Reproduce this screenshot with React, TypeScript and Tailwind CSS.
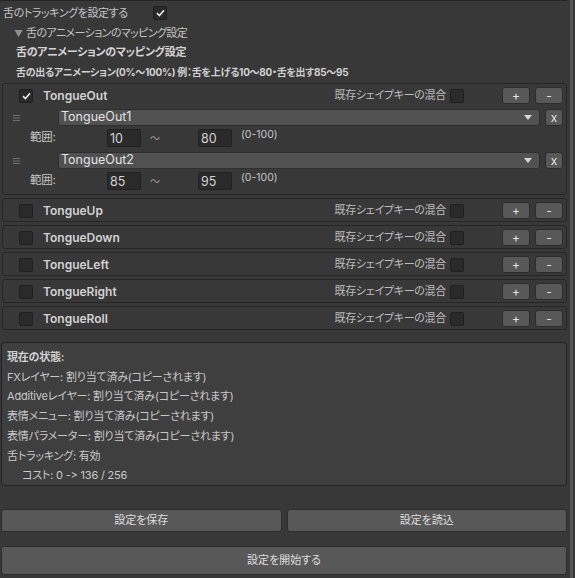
import React from "react";

const FONT =
  "font-[family-name:Inter,'Noto_Sans_CJK_JP',sans-serif] [font-feature-settings:'palt','calt'_0,'liga'_0]";

function Check() {
  return (
    <svg width="9" height="8" viewBox="0 0 9 8" fill="none">
      <path d="M1 4.2 L3.4 6.5 L8 1.3" stroke="#e8e8e8" strokeWidth="1.6" />
    </svg>
  );
}

function CheckBox({ checked = false }: { checked?: boolean }) {
  return (
    <div className="w-[14px] h-[14px] shrink-0 rounded-[2px] bg-[#2a2a2a] border border-[#1f1f1f] flex items-center justify-center">
      {checked && <Check />}
    </div>
  );
}

function SmallButton({ label, w = "w-[28px]" }: { label: string; w?: string }) {
  return (
    <div
      className={`${w} h-[17px] shrink-0 rounded-[3px] bg-[#585858] border border-[#2c2c2c] flex items-center justify-center text-[12px] leading-none text-[#e4e4e4]`}
    >
      {label}
    </div>
  );
}

function Handle() {
  return (
    <svg width="7" height="6" viewBox="0 0 7 6">
      <rect x="0" y="0" width="7" height="1" fill="#6e6e6e" />
      <rect x="0" y="2.5" width="7" height="1" fill="#6e6e6e" />
      <rect x="0" y="5" width="7" height="1" fill="#6e6e6e" />
    </svg>
  );
}

function Dropdown({ value }: { value: string }) {
  return (
    <div className="flex items-center h-[17px] mt-[5px]">
      <div className="w-[55px] pl-[10px] flex items-center">
        <Handle />
      </div>
      <div className="flex-1 h-full rounded-[3px] bg-[#515151] border border-[#2e2e2e] flex items-center pl-[2px] pr-[7px]">
        <span className="flex-1 text-[12.5px] text-[#e2e2e2] leading-none">{value}</span>
        <svg width="8" height="5" viewBox="0 0 8 5">
          <path d="M0 0 H8 L4 5 Z" fill="#d8d8d8" />
        </svg>
      </div>
      <div className="ml-[5px] mr-[3px]">
        <SmallButton label="x" w="w-[18px]" />
      </div>
    </div>
  );
}

function NumField({ value }: { value: string }) {
  return (
    <div className="w-[34px] h-[18px] shrink-0 rounded-[2px] bg-[#2a2a2a] border border-[#212121] flex items-end pl-[2px] pb-[1px] text-[12.5px] leading-none text-[#d4d4d4]">
      {value}
    </div>
  );
}

function RangeRow({ from, to }: { from: string; to: string }) {
  return (
    <div className="flex items-center h-[18px] mt-[3px]">
      <div className="w-[104px] pl-[27px] text-[11.5px] tracking-[-0.2px] text-[#c4c4c4] leading-none">範囲:</div>
      <NumField value={from} />
      <div className="w-[57px] pl-[9px] text-[10px] text-[#a0a0a0] leading-none">〜</div>
      <NumField value={to} />
      <div className="ml-[9px] self-start pt-[1px] text-[10.5px] text-[#c4c4c4] leading-none">(0-100)</div>
    </div>
  );
}

function HeaderRow({ name, checked }: { name: string; checked?: boolean }) {
  return (
    <div className="flex items-center h-[17px]">
      <div className="ml-[16px]">
        <CheckBox checked={checked} />
      </div>
      <span className="ml-[10px] text-[12px] font-semibold text-[#d2d2d2] leading-none">{name}</span>
      <div className="flex-1" />
      <span className="text-[11px] tracking-[-0.3px] text-[#bdbdbd] leading-none">既存シェイプキーの混合</span>
      <div className="ml-[4px]">
        <CheckBox />
      </div>
      <div className="ml-[38px]">
        <SmallButton label="+" />
      </div>
      <div className="ml-[5px] mr-[3px]">
        <SmallButton label="-" />
      </div>
    </div>
  );
}

const others = ["TongueUp", "TongueDown", "TongueLeft", "TongueRight", "TongueRoll"];

const status = [
  "FXレイヤー: 割り当て済み(コピーされます)",
  "Additiveレイヤー: 割り当て済み(コピーされます)",
  "表情メニュー: 割り当て済み(コピーされます)",
  "表情パラメーター: 割り当て済み(コピーされます)",
  "舌トラッキング: 有効",
];

export default function App() {
  return (
    <div className={`w-[575px] h-[578px] bg-[#383838] flex overflow-hidden ${FONT}`}>
      <div className="w-[568px] flex flex-col">
        <div className="h-[1px] w-[567px] bg-[#252525]" />

        {/* top toggle */}
        <div className="h-[24px] flex items-center">
          <span className="w-[153px] pl-[3px] text-[11px] tracking-[-0.4px] text-[#c4c4c4] leading-none">
            舌のトラッキングを設定する
          </span>
          <CheckBox checked />
        </div>

        {/* foldout */}
        <div className="h-[17px] flex items-center pl-[14px] text-[11px] leading-none">
          <span className="text-[9px] text-[#8e8e8e] mr-[3px]">▼</span>
          <span className="text-[#c4c4c4] tracking-[-0.6px]">舌のアニメーションのマッピング設定</span>
        </div>
        <div className="h-[20px] flex items-center pl-[16px] text-[11px] tracking-[-0.3px] font-bold text-[#d4d4d4] leading-none">
          舌のアニメーションのマッピング設定
        </div>
        <div className="h-[20px] flex items-center pl-[16px] text-[10px] tracking-[-0.3px] font-bold text-[#d0d0d0] leading-none">
          舌の出るアニメーション(0%〜100%) 例：舌を上げる10〜80・舌を出す85〜95
        </div>

        {/* entries */}
        <div className="flex flex-col gap-[3px] mt-[1px] ml-[2px] mr-[1px]">
          <div className="rounded-[3px] border border-[#262626] pt-[3px] pb-[4px]">
            <HeaderRow name="TongueOut" checked />
            <Dropdown value="TongueOut1" />
            <RangeRow from="10" to="80" />
            <div className="mt-[2px]" />
            <Dropdown value="TongueOut2" />
            <RangeRow from="85" to="95" />
          </div>
          {others.map((n) => (
            <div key={n} className="rounded-[3px] border border-[#262626] pt-[3px] pb-[2px]">
              <HeaderRow name={n} />
            </div>
          ))}
        </div>

        {/* status */}
        <div className="mt-[12px] ml-[1px] mr-[1px] h-[144px] rounded-[3px] border border-[#222222] bg-[#3f3f3f] pt-[5px] pl-[5px] text-[11px] tracking-[-0.2px] text-[#c8c8c8] leading-[19.7px]">
          <div className="font-bold text-[#d0d0d0]">現在の状態:</div>
          {status.map((s) => (
            <div key={s}>{s}</div>
          ))}
          <div className="pl-[15px]">コスト: 0 -&gt; 136 / 256</div>
        </div>

        {/* actions */}
        <div className="mt-[23px] flex gap-[5px] pl-[1px] pr-[1px]">
          <div className="flex-1 h-[23px] rounded-[3px] bg-[#585858] border border-[#2c2c2c] flex items-center justify-center text-[11px] text-[#dedede] leading-none">
            設定を保存
          </div>
          <div className="flex-1 h-[23px] rounded-[3px] bg-[#585858] border border-[#2c2c2c] flex items-center justify-center text-[11px] text-[#dedede] leading-none">
            設定を読込
          </div>
        </div>
        <div className="mt-[14px] ml-[1px] mr-[1px] h-[29px] rounded-[3px] bg-[#585858] border border-[#2c2c2c] flex items-center justify-center text-[11px] text-[#dedede] leading-none">
          設定を開始する
        </div>
      </div>
      <div className="ml-[2px] w-[3px] h-full bg-[#555555]" />
    </div>
  );
}
